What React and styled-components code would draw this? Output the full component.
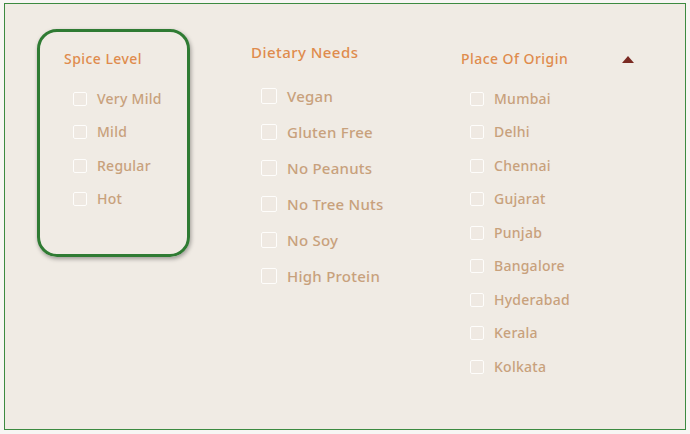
import React from "react";
import styled, { createGlobalStyle } from "styled-components";

const GlobalStyle = createGlobalStyle`
  html, body {
    margin: 0;
    padding: 0;
    background: #f7f6f4;
  }
  body {
    font-family: "Noto Sans", "Open Sans", sans-serif;
  }
`;

const filters = [
  {
    title: "Spice Level",
    items: ["Very Mild", "Mild", "Regular", "Hot"],
  },
  {
    title: "Dietary Needs",
    items: ["Vegan", "Gluten Free", "No Peanuts", "No Tree Nuts", "No Soy", "High Protein"],
  },
  {
    title: "Place Of Origin",
    items: [
      "Mumbai",
      "Delhi",
      "Chennai",
      "Gujarat",
      "Punjab",
      "Bangalore",
      "Hyderabad",
      "Kerala",
      "Kolkata",
    ],
  },
];

const Panel = styled.div`
  margin: 3px 4px 0 4px;
  height: 425px;
  border: 1px solid #3c8a40;
  background: #f0ebe4;
  display: flex;
  align-items: flex-start;
`;

const Highlight = styled.section`
  margin: 25px 0 0 32px;
  width: 153px;
  height: 228px;
  box-sizing: border-box;
  border: 3px solid #2f7b33;
  border-radius: 20px;
  box-shadow: 1px 2px 4px rgba(0, 0, 0, 0.35);
  padding: 17px 0 0 24px;
`;

const Group = styled.section`
  margin-top: ${(p) => p.$top}px;
  margin-left: ${(p) => p.$left}px;
  width: ${(p) => p.$width}px;
`;

const Header = styled.div`
  display: flex;
  align-items: center;
  justify-content: space-between;
  height: 20px;
`;

const Title = styled.h3`
  margin: 0;
  font-size: ${(p) => p.$size}px;
  line-height: 20px;
  font-weight: 500;
  letter-spacing: 0.45px;
  color: #df8b4d;
`;

const Caret = styled.svg`
  width: 12px;
  height: 7px;
  display: block;
`;

const List = styled.ul`
  list-style: none;
  margin: ${(p) => p.$gap}px 0 0 0;
  padding: 0 0 0 ${(p) => p.$indent}px;
`;

const Row = styled.li`
  display: flex;
  align-items: center;
  gap: 10px;
  height: ${(p) => p.$height}px;
`;

const Box = styled.span`
  width: ${(p) => p.$size}px;
  height: ${(p) => p.$size}px;
  box-sizing: border-box;
  border: 1.5px solid #fefdfb;
  border-radius: 2px;
  background: #efe9e2;
  flex: none;
`;

const Label = styled.span`
  font-size: ${(p) => p.$size}px;
  font-weight: 500;
  letter-spacing: 0.25px;
  color: #c8a17c;
  line-height: 1;
`;

const Options = ({ items, rowHeight, box, size, indent, gap }) => (
  <List $indent={indent} $gap={gap}>
    {items.map((item) => (
      <Row key={item} $height={rowHeight}>
        <Box $size={box} />
        <Label $size={size}>{item}</Label>
      </Row>
    ))}
  </List>
);

const App = () => {
  const [spice, diet, origin] = filters;
  return (
    <>
      <GlobalStyle />
      <Panel>
        <Highlight>
          <Header>
            <Title $size={14}>{spice.title}</Title>
          </Header>
          <Options items={spice.items} rowHeight={33.5} box={14} size={14} indent={9} gap={13} />
        </Highlight>

        <Group $top={38} $left={61} $width={210}>
          <Header>
            <Title $size={15}>{diet.title}</Title>
          </Header>
          <Options items={diet.items} rowHeight={36} box={16} size={15} indent={10} gap={16} />
        </Group>

        <Group $top={45} $left={0} $width={173}>
          <Header>
            <Title $size={14}>{origin.title}</Title>
            <Caret viewBox="0 0 12 7">
              <polygon points="6,0 12,7 0,7" fill="#7a2a22" />
            </Caret>
          </Header>
          <Options items={origin.items} rowHeight={33.5} box={14} size={14} indent={9} gap={13} />
        </Group>
      </Panel>
    </>
  );
};

export default App;
